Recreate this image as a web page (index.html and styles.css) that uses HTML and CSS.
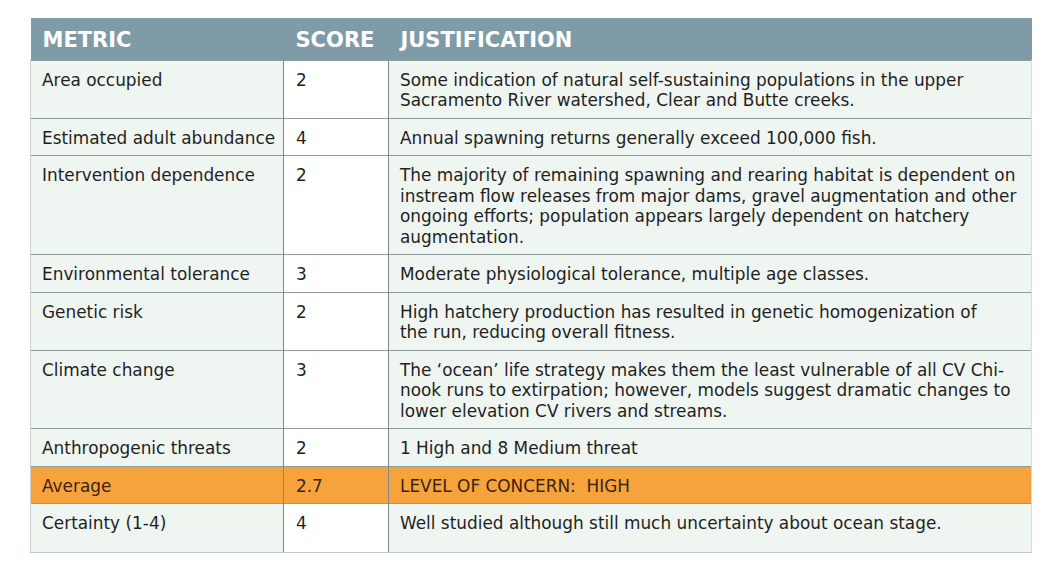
FILE: index.html
```html
<!DOCTYPE html>
<html>
<head>
<meta charset="utf-8">
<link rel="stylesheet" href="styles.css">
</head>
<body>
<table class="metrics">
  <colgroup>
    <col class="c-metric">
    <col class="c-score">
    <col class="c-just">
  </colgroup>
  <thead>
    <tr><th>METRIC</th><th>SCORE</th><th>JUSTIFICATION</th></tr>
  </thead>
  <tbody>
    <tr><td>Area occupied</td><td class="score">2</td><td>Some indication of natural self-sustaining populations in the upper<br>Sacramento River watershed, Clear and Butte creeks.</td></tr>
    <tr><td>Estimated adult abundance</td><td class="score">4</td><td>Annual spawning returns generally exceed 100,000 fish.</td></tr>
    <tr><td>Intervention dependence</td><td class="score">2</td><td>The majority of remaining spawning and rearing habitat is dependent on<br>instream flow releases from major dams, gravel augmentation and other<br>ongoing efforts; population appears largely dependent on hatchery<br>augmentation.</td></tr>
    <tr><td>Environmental tolerance</td><td class="score">3</td><td>Moderate physiological tolerance, multiple age classes.</td></tr>
    <tr><td>Genetic risk</td><td class="score">2</td><td>High hatchery production has resulted in genetic homogenization of<br>the run, reducing overall fitness.</td></tr>
    <tr><td>Climate change</td><td class="score">3</td><td>The ‘ocean’ life strategy makes them the least vulnerable of all CV Chi-<br>nook runs to extirpation; however, models suggest dramatic changes to<br>lower elevation CV rivers and streams.</td></tr>
    <tr><td>Anthropogenic threats</td><td class="score">2</td><td>1 High and 8 Medium threat</td></tr>
    <tr class="avg"><td>Average</td><td class="score">2.7</td><td>LEVEL OF CONCERN:&nbsp; HIGH</td></tr>
    <tr class="last"><td>Certainty (1-4)</td><td class="score">4</td><td>Well studied although still much uncertainty about ocean stage.</td></tr>
  </tbody>
</table>
</body>
</html>
```
FILE: styles.css
```css
html, body {
  margin: 0;
  padding: 0;
  background: #ffffff;
}
body {
  padding: 18px 0 0 30px;
  font-family: "DejaVu Sans", "Liberation Sans", sans-serif;
  color: #1f1f1f;
}
.metrics {
  border-collapse: collapse;
  width: 1001px;
  table-layout: fixed;
  font-size: 16.9px;
  line-height: 20.5px;
}
.c-metric { width: 253px; }
.c-score { width: 105px; }
.c-just { width: 643px; }
.metrics th {
  background: #7f9ba8;
  color: #ffffff;
  text-align: left;
  font-size: 21px;
  font-weight: 700;
  height: 42px;
  padding: 3px 12px 0;
  box-sizing: border-box;
  border: none;
}
.metrics td {
  background: #eff5f1;
  padding: 9px 12px 7px 11px;
  vertical-align: top;
  white-space: nowrap;
  border-top: 1px solid #8d9a9a;
  border-left: 1px solid #7d8a8b;
  border-right: 1px solid #7d8a8b;
}
.metrics td:first-child {
  border-left: 1px solid #c9d0d0;
}
.metrics td:last-child {
  border-right: 1px solid #d5dcdc;
}
.metrics td.score {
  background: #ffffff;
  padding-left: 12px;
}
.metrics tr.avg td {
  background: #f6a33e;
  color: #3a2410;
}
.metrics tr.last td {
  padding-bottom: 18px;
  border-bottom: 1px solid #c3caca;
}
```
